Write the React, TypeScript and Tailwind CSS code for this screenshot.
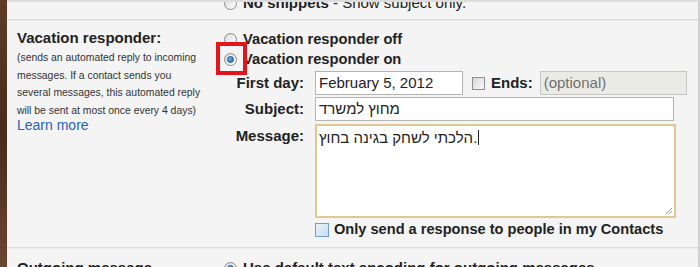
import React from "react";

function Radio({ checked = false }: { checked?: boolean }) {
  return (
    <span className="flex h-[13px] w-[13px] shrink-0 items-center justify-center rounded-full border border-[#8a8a8a] bg-gradient-to-br from-[#dcdcdc] to-[#ffffff]">
      {checked && (
        <span className="h-[7px] w-[7px] rounded-full border border-[#0f4f8a] bg-gradient-to-br from-[#7fc0f0] to-[#1d6fb8]" />
      )}
    </span>
  );
}

function Checkbox({ blue = false }: { blue?: boolean }) {
  return (
    <span
      className={
        blue
          ? "block h-[14px] w-[14px] shrink-0 border border-[#6f9dcc] bg-gradient-to-br from-[#eaf3fb] to-[#c9def2]"
          : "block h-[13px] w-[13px] shrink-0 border border-[#8f8f8f] bg-gradient-to-br from-[#d8d8d8] to-[#f8f8f8]"
      }
    />
  );
}

export default function App() {
  return (
    <div className="flex h-[267px] w-[700px] overflow-hidden font-['Liberation_Sans',Arial,sans-serif] text-[#222]">
      {/* wooden page edge */}
      <div className="w-[7px] shrink-0 bg-gradient-to-b from-[#5e3c26] via-[#472b1a] to-[#6b4631]" />

      <div className="flex flex-1 flex-col border-r-2 border-t-2 border-r-[#cfcfcf] border-t-[#dcdcdc] bg-[#f4f4f4]">
        {/* cut-off previous row */}
        <div className="h-[17px] shrink-0 overflow-hidden">
          <div className="-mt-[8px] flex items-center gap-[6px] pl-[217px] text-[15px] leading-[18px]">
            <Radio />
            <span>
              <b>No snippets</b> - Show subject only.
            </span>
          </div>
        </div>
        <div className="h-px shrink-0 bg-[#dddddd]" />
        <div className="h-px shrink-0 bg-[#ebebeb]" />

        {/* Vacation responder */}
        <div className="flex shrink-0 pt-[8px]">
          <div className="w-[217px] shrink-0 pl-[10px]">
            <div className="text-[15px] font-bold leading-[18px]">Vacation responder:</div>
            <div className="mt-[2px] text-[10.4px] leading-[17.7px] text-[#333]">
              (sends an automated reply to incoming
              <br />
              messages. If a contact sends you
              <br />
              several messages, this automated reply
              <br />
              will be sent at most once every 4 days)
            </div>
            <a className="-mt-[3px] block text-[14px] leading-[17px] text-[#2a62b8]">Learn more</a>
          </div>

          <div className="flex flex-col">
            <div className="flex h-[20px] items-center gap-[6px]">
              <Radio />
              <span className="text-[14.7px] font-bold">Vacation responder off</span>
            </div>
            <div className="flex h-[20px] items-center gap-[6px]">
              <span className="relative flex">
                <Radio checked />
                <span className="absolute -left-[8px] -top-[11px] h-[33px] w-[31px] border-[4px] border-[#e3141c]" />
              </span>
              <span className="text-[14.7px] font-bold">Vacation responder on</span>
            </div>

            <div className="mt-[2px] grid grid-cols-[91px_auto] gap-y-[2px] text-[15px]">
              <span className="flex h-[24px] items-center justify-end pr-[11px] font-bold">First day:</span>
              <div className="flex items-center">
                <div className="flex h-[24px] w-[148px] items-center border border-[#b5b5b5] bg-white px-[3px]">
                  February 5, 2012
                </div>
                <span className="ml-[9px]">
                  <Checkbox />
                </span>
                <span className="ml-[6px] font-bold">Ends:</span>
                <div className="ml-[7px] flex h-[24px] w-[147px] items-center border border-[#c6c6c6] bg-[#ebebe6] px-[3px] text-[#707070]">
                  (optional)
                </div>
              </div>

              <span className="flex h-[24px] items-center justify-end pr-[11px] font-bold">Subject:</span>
              <div className="flex h-[24px] w-[359px] items-center border border-[#b5b5b5] bg-white px-[3px]">
                <span>מחוץ למשרד</span>
              </div>

              <span className="flex items-start justify-end pr-[11px] pt-[2px] font-bold">Message:</span>
              <div className="relative mt-[1px] h-[94px] w-[361px] border-2 border-[#e0c890] bg-white px-[2px] pt-[1px]">
                <span>הלכתי לשחק בגינה בחוץ.</span>
                <span className="ml-[1px] inline-block h-[15px] w-px translate-y-[2px] bg-[#222]" />
                <svg className="absolute bottom-[1px] right-[1px]" width="9" height="9" viewBox="0 0 9 9">
                  <path d="M8 2 L2 8 M8 5 L5 8" stroke="#9a9a9a" strokeWidth="1" />
                </svg>
              </div>

              <span />
              <div className="mt-[1px] flex h-[18px] items-center gap-[5px]">
                <Checkbox blue />
                <span className="text-[14.6px] font-bold">Only send a response to people in my Contacts</span>
              </div>
            </div>
          </div>
        </div>

        <div className="mt-[8px] h-px shrink-0 bg-[#dddddd]" />
        <div className="h-px shrink-0 bg-[#ebebeb]" />

        {/* cut-off next row */}
        <div className="flex shrink-0 pt-[10px] text-[15px] font-bold leading-[18px]">
          <div className="w-[217px] shrink-0 pl-[10px]">Outgoing message</div>
          <div className="flex items-center gap-[6px]">
            <Radio checked />
            <span>Use default text encoding for outgoing messages</span>
          </div>
        </div>
      </div>
    </div>
  );
}
